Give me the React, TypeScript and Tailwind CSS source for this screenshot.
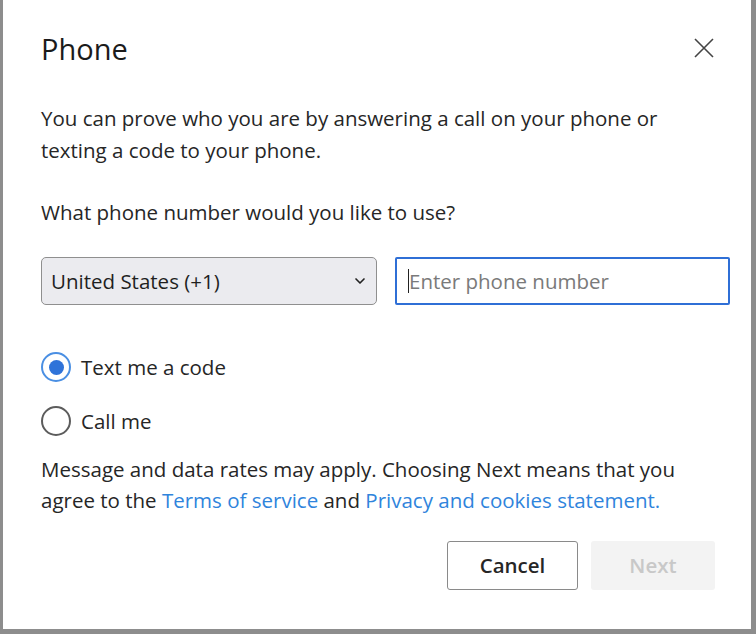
import { ChevronDown } from "lucide-react";

const font = { fontFamily: '"Open Sans", "Noto Sans", sans-serif' };

function Radio({ checked, label }: { checked?: boolean; label: string }) {
  return (
    <label className="flex items-center gap-[10px] h-[30px]">
      <span
        className={
          checked
            ? "w-[30px] h-[30px] rounded-full border-2 border-[#4a8fe3] flex items-center justify-center"
            : "w-[30px] h-[30px] rounded-full border-2 border-[#5c5c5c]"
        }
      >
        {checked && <span className="w-[15px] h-[15px] rounded-full bg-[#2f73d9]" />}
      </span>
      <span className="text-[20.5px] text-[#262626]">{label}</span>
    </label>
  );
}

export default function App() {
  return (
    <div className="w-[756px] h-[634px] bg-[#8d8d8d] pl-[3px] pr-[5px] pb-[5px]" style={font}>
      <div className="h-full bg-white pl-[38px] pr-[21px] pt-[30px] flex flex-col">
        <div className="h-9 flex items-center justify-between pr-[16px]">
          <h1 className="text-[29px] font-medium text-[#1b1b1b] leading-none">Phone</h1>
          <svg width="20" height="20" viewBox="0 0 20 20" className="text-[#444]">
            <path d="M1 1 L19 19 M19 1 L1 19" stroke="currentColor" strokeWidth="1.6" fill="none" />
          </svg>
        </div>

        <p className="mt-[36px] text-[20.5px] leading-[32px] text-[#262626]">
          You can prove who you are by answering a call on your phone or
          <br />
          texting a code to your phone.
        </p>

        <p className="mt-[30px] text-[20.5px] leading-[32px] text-[#262626]">
          What phone number would you like to use?
        </p>

        <div className="mt-[29px] flex gap-[18px]">
          <div className="w-[336px] h-[48px] rounded-[5px] border border-[#8f8f8f] bg-[#ebebef] flex items-center justify-between pl-[9px] pr-[8px]">
            <span className="text-[20.5px] text-[#1f1f1f]">United States (+1)</span>
            <ChevronDown className="w-[16px] h-[16px] text-[#222]" strokeWidth={2.5} />
          </div>
          <div className="flex-1 h-[48px] border-2 border-[#2f6fd6] rounded-[2px] flex items-center pl-[11px]">
            <span className="w-px h-[24px] bg-[#222]" />
            <span className="text-[20.5px] text-[#7a7a7a]">Enter phone number</span>
          </div>
        </div>

        <div className="mt-[47px] flex flex-col gap-[24px]">
          <Radio checked label="Text me a code" />
          <Radio label="Call me" />
        </div>

        <p className="mt-[18px] text-[20.5px] leading-[31px] text-[#262626]">
          Message and data rates may apply. Choosing Next means that you
          <br />
          agree to the <span className="text-[#2f84dc]">Terms of service</span> and{" "}
          <span className="text-[#2f84dc]">Privacy and cookies statement.</span>
        </p>

        <div className="mt-[25px] flex justify-end gap-[13px] pr-[15px]">
          <button className="w-[131px] h-[49px] rounded-[3px] border border-[#8a8a8a] text-[20.5px] font-semibold text-[#262626]">
            Cancel
          </button>
          <button className="w-[124px] h-[49px] rounded-[3px] bg-[#f3f3f3] text-[20.5px] font-semibold text-[#c8c8c8]">
            Next
          </button>
        </div>
      </div>
    </div>
  );
}
